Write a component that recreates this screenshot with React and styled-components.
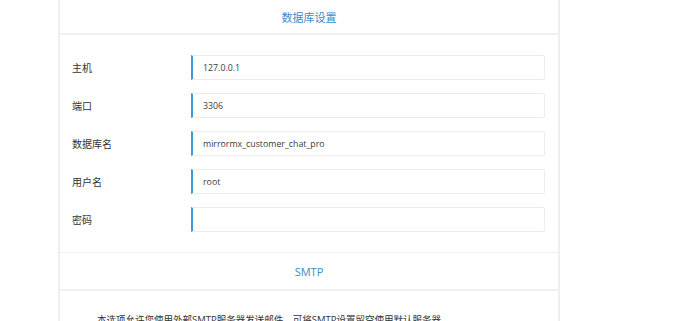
import React from "react";
import styled, { createGlobalStyle } from "styled-components";

const Global = createGlobalStyle`
  html, body { margin: 0; padding: 0; background: #fff; }
  body {
    font-family: "Open Sans", "Noto Sans CJK SC", sans-serif;
    -webkit-font-smoothing: antialiased;
  }
`;

const Page = styled.div`
  height: 321px;
  overflow: hidden;
  padding-left: 58px;
`;

const Card = styled.div`
  width: 498px;
  border-left: 2px solid #eeeeee;
  border-right: 2px solid #eeeeee;
  background: #fff;
`;

const SectionHeader = styled.div`
  height: ${(p) => p.$h}px;
  display: flex;
  align-items: center;
  justify-content: center;
  color: #3a8cc9;
  font-size: 11px;
  border-bottom: ${(p) => p.$line}px solid #f0f0f0;
  box-sizing: border-box;
`;

const Body = styled.div`
  display: flex;
  flex-direction: column;
  gap: 13px;
  padding: ${(p) => p.$pad};
  border-bottom: 1px solid #f0f0f0;
`;

const Row = styled.div`
  display: grid;
  grid-template-columns: 119px 354px;
  align-items: center;
  padding-left: 12px;
`;

const Label = styled.label`
  font-size: 10px;
  color: #333;
`;

const Input = styled.div`
  height: 25px;
  box-sizing: border-box;
  border: 1px solid #ececec;
  border-left: 2px solid #3b9bd9;
  border-radius: 0 2px 2px 0;
  padding-left: 10px;
  display: flex;
  align-items: center;
  font-size: 8.8px;
  color: #3c3c3c;
`;

const Note = styled.p`
  margin: 0;
  padding: 21px 0 0 37px;
  font-size: 9.5px;
  color: #333;
  white-space: nowrap;
`;

const fields = [
  ["主机", "127.0.0.1"],
  ["端口", "3306"],
  ["数据库名", "mirrormx_customer_chat_pro"],
  ["用户名", "root"],
  ["密码", ""],
];

export default function App() {
  return (
    <>
      <Global />
      <Page>
        <Card>
          <SectionHeader $h={35} $line={2}>数据库设置</SectionHeader>
          <Body $pad="20px 0 20px">
            {fields.map(([l, v]) => (
              <Row key={l}>
                <Label>{l}</Label>
                <Input>{v}</Input>
              </Row>
            ))}
          </Body>
          <SectionHeader $h={38} $line={2}>SMTP</SectionHeader>
          <Note>本选项允许您使用外部SMTP服务器发送邮件，可将SMTP设置留空使用默认服务器</Note>
        </Card>
      </Page>
    </>
  );
}
